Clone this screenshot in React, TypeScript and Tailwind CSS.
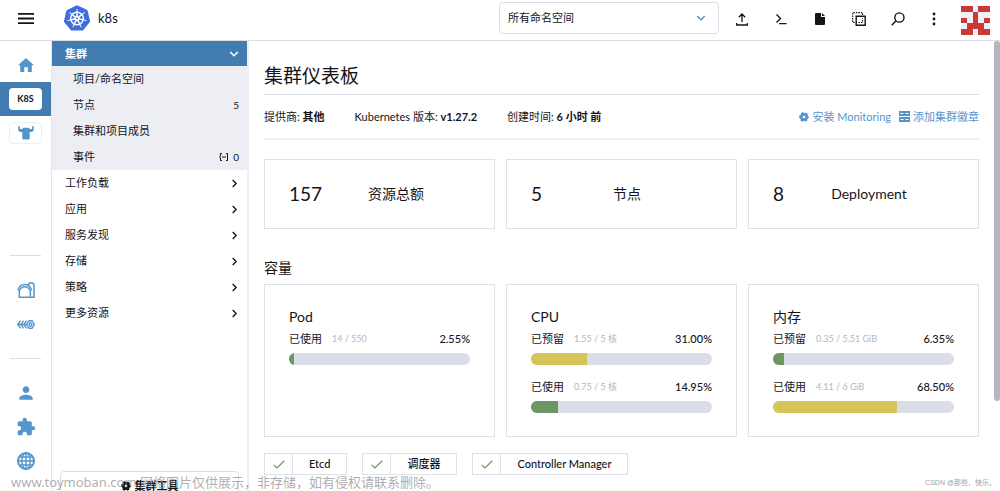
import type { ReactNode } from "react";
import { SiKubernetes } from "react-icons/si";
import { MdExtension, MdPerson } from "react-icons/md";

type IconProps = { className?: string };

const AVATAR = ["11011", "00100", "10101", "01110", "11011"];

function Chevron({ className }: IconProps) {
  return (
    <svg viewBox="0 0 10 10" className={className} fill="none" stroke="currentColor" strokeWidth="1.5">
      <path d="M3 1.2 6.8 5 3 8.8" />
    </svg>
  );
}

function Gear({ className }: IconProps) {
  return (
    <svg viewBox="0 0 24 24" className={className} fill="none" stroke="currentColor">
      <circle cx="12" cy="12" r="6.5" strokeWidth="6.5" />
      <circle cx="12" cy="12" r="9.8" strokeWidth="4" strokeDasharray="5.4 4.86" strokeDashoffset="2.7" />
    </svg>
  );
}

function ServerIcon({ className }: IconProps) {
  return (
    <svg viewBox="0 0 11 11" className={className}>
      <path
        fill="currentColor"
        fillRule="evenodd"
        d="M0 0h11v5H0zM1.5 2v1h3V2zM6.5 2v1h3V2zM0 6h11v5H0zM1.5 8v1h3V8zM6.5 8v1h3V8z"
      />
    </svg>
  );
}

function HomeIcon() {
  return (
    <svg viewBox="0 0 16 14" className="h-[14px] w-4" fill="currentColor">
      <path d="M8 0 0 7.2h2.2V14h4V9.2h3.6V14h4V7.2H16z" />
    </svg>
  );
}

function CowIcon() {
  return (
    <svg viewBox="0 0 16 14" className="h-[14px] w-4" fill="currentColor">
      <path d="M.3.2 1.7 0l.2 2.4c.1.5.4.7.9.7h1.5C4.6 2.2 5.3 1.7 6.2 1.7h3.6c.9 0 1.6.5 1.9 1.4h1.5c.5 0 .8-.2.9-.7L14.3 0l1.4.2.1 2.6c0 2-1 3.3-2.6 3.3h-1.5v5.8c0 1-.7 1.7-1.7 1.7H6c-1 0-1.7-.7-1.7-1.7V6.1H2.8C1.2 6.1.2 4.8.2 2.8z" />
    </svg>
  );
}

function BarnIcon() {
  return (
    <svg viewBox="0 0 18 16" className="h-4 w-[18px]" fill="none" stroke="currentColor" strokeWidth="1.5">
      <path d="M.8 8.5C2 4.5 4.8 2.6 7.8 2.6s5.8 1.9 7 5.9" />
      <path d="M2.3 15.2V9c1-2.6 3-4.2 5.5-4.2S12.3 6.4 13.3 9v6.2z" />
      <path d="M11.2 3.2C11.5 1.6 12.6.8 14 .8c1.9 0 3 1.3 3 3v11.4h-3.7" />
    </svg>
  );
}

function FleetIcon() {
  return (
    <svg viewBox="0 0 18 9" className="h-[9px] w-[18px]" fill="none" stroke="currentColor" strokeWidth="1.4">
      <path d="M3.500.7 1 4.500l2.500 3.800M6.500.7 4 4.500l2.500 3.800M9.500.7 7 4.500l2.500 3.800" />
      <path d="M12 .7h3l2.300 3.800L15 8.300h-3L9.800 4.500zM13 2.900h1l1 1.600-1 1.600h-1l-1-1.600zM0 4.500h10" />
    </svg>
  );
}

function GlobeIcon() {
  return (
    <svg viewBox="0 0 18 18" className="size-[18px]" fill="none" stroke="currentColor" strokeWidth="1.4">
      <circle cx="9" cy="9" r="8" strokeWidth="2" />
      <ellipse cx="9" cy="9" rx="4.2" ry="8" />
      <path d="M9 1v16M1 9h16M2.5 5h13M2.5 13h13" />
    </svg>
  );
}

function RailLink({ label, children }: { label: string; children: ReactNode }) {
  return (
    <a href="#" aria-label={label} className="flex h-[34px] shrink-0 items-center justify-center text-[#5595cd]">
      {children}
    </a>
  );
}

function Rail() {
  return (
    <nav className="flex w-[52px] shrink-0 flex-col border-r border-[#e6e7ee] pt-[7px] pb-[13px]">
      <RailLink label="Home">
        <HomeIcon />
      </RailLink>
      <a href="#" className="flex h-[34px] shrink-0 items-center justify-center bg-[#427cb0]">
        <span className="flex h-[22px] w-[33px] items-center justify-center rounded bg-white text-[9px] font-bold">
          K8S
        </span>
      </a>
      <a href="#" aria-label="local" className="flex h-[34px] shrink-0 items-center justify-center text-[#5595cd]">
        <span className="flex h-[22px] w-[33px] items-center justify-center rounded border border-[#eeeff4]">
          <CowIcon />
        </span>
      </a>
      <div className="flex-1" />
      <hr className="mx-[10px] mb-[17px] border-[#dcdee7]" />
      <RailLink label="Harvester">
        <BarnIcon />
      </RailLink>
      <RailLink label="Fleet">
        <FleetIcon />
      </RailLink>
      <hr className="mx-[10px] my-[17px] border-[#dcdee7]" />
      <RailLink label="Users">
        <MdPerson className="size-5" />
      </RailLink>
      <RailLink label="Extensions">
        <MdExtension className="size-5" />
      </RailLink>
      <RailLink label="Global">
        <GlobeIcon />
      </RailLink>
    </nav>
  );
}

const CLUSTER_ITEMS: { label: string; count?: string; namespaced?: boolean }[] = [
  { label: "项目/命名空间" },
  { label: "节点", count: "5" },
  { label: "集群和项目成员" },
  { label: "事件", count: "0", namespaced: true },
];

const GROUPS = ["工作负载", "应用", "服务发现", "存储", "策略", "更多资源"];

function Sidebar() {
  return (
    <aside className="flex w-[197px] shrink-0 flex-col overflow-hidden border-r-2 border-[#eeeff4]">
      <nav className="flex-1">
        <button className="flex h-[25px] w-full items-center justify-between bg-[#427cb0] pr-2 pl-[13px] font-bold text-white">
          集群
          <Chevron className="size-[10px] rotate-90" />
        </button>
        <ul className="bg-[#edeef3]">
          {CLUSTER_ITEMS.map((item) => (
            <li key={item.label}>
              <a href="#" className="flex h-[26px] items-center justify-between pr-2 pl-[21px]">
                {item.label}
                <span className="flex items-center gap-1 text-[10px]">
                  {item.namespaced && (
                    <svg viewBox="0 0 10 8" className="h-2 w-[10px]" fill="none" stroke="currentColor">
                      <path d="M3 .5H1.5v2.5L.5 4l1 1v2.5H3M7 .5h1.5v7H7M3 4h4" />
                    </svg>
                  )}
                  {item.count}
                </span>
              </a>
            </li>
          ))}
        </ul>
        {GROUPS.map((group) => (
          <button key={group} className="flex h-[26px] w-full items-center justify-between pr-2 pl-[13px]">
            {group}
            <Chevron className="size-[9px]" />
          </button>
        ))}
      </nav>
      <footer className="h-5 overflow-hidden px-2">
        <button className="flex h-[30px] w-full items-center justify-center gap-1 rounded border border-[#dcdee7] font-bold">
          <Gear className="size-[10px]" />
          集群工具
        </button>
      </footer>
    </aside>
  );
}

function ToolButton({ label, children }: { label: string; children: ReactNode }) {
  return (
    <button aria-label={label} className="flex h-8 w-[39px] items-center justify-center">
      {children}
    </button>
  );
}

function Header() {
  return (
    <header className="flex h-[41px] shrink-0 items-center border-b border-[#dcdee7] pb-1">
      <button aria-label="Menu" className="flex h-full w-[52px] shrink-0 items-center justify-center">
        <svg viewBox="0 0 16 11" className="h-[11px] w-4" fill="currentColor">
          <path d="M0 0h16v1.8H0zM0 4.6h16v1.8H0zM0 9.2h16V11H0z" />
        </svg>
      </button>
      <div className="flex flex-1 items-center gap-2 pl-3 text-[13px]">
        <SiKubernetes className="size-[26px] text-[#3e6ddf]" />
        k8s
      </div>
      <div className="relative w-[220px]">
        <select
          aria-label="命名空间"
          className="h-8 w-full appearance-none rounded border border-[#dcdee7] bg-white px-2 text-[11px]"
        >
          <option>所有命名空间</option>
        </select>
        <Chevron className="pointer-events-none absolute top-[11px] right-[13px] size-[10px] rotate-90 text-[#5595cd]" />
      </div>
      <div className="flex items-center pt-[2px] pl-[3px]">
        <ToolButton label="Import">
          <svg viewBox="0 0 12 13" className="h-[13px] w-3" fill="none" stroke="currentColor" strokeWidth="1.3">
            <path d="M6 9V1M2.8 4.2 6 1l3.2 3.2M.7 10v2h10.6v-2" />
          </svg>
        </ToolButton>
        <ToolButton label="Shell">
          <svg viewBox="0 0 12 12" className="size-3" fill="none" stroke="currentColor" strokeWidth="1.4">
            <path d="m1.5 1.5 4 4-4 4M4 10.6h7.5" />
          </svg>
        </ToolButton>
        <ToolButton label="Kubeconfig">
          <svg viewBox="0 0 10 12" className="h-3 w-[10px]" fill="currentColor">
            <path d="M1 0h5v4h4v7a1 1 0 0 1-1 1H1a1 1 0 0 1-1-1V1a1 1 0 0 1 1-1zM7 0l3 3H7z" />
          </svg>
        </ToolButton>
        <ToolButton label="Copy">
          <svg viewBox="0 0 14 14" className="size-[14px]" fill="none" stroke="currentColor">
            <path strokeWidth="1.2" strokeDasharray="1.5 1" d="M10.5 3V.7H.7v9.8H3" />
            <path strokeWidth="1.4" d="M4.2 4.2h9v9h-9z" />
            <path strokeDasharray="1.5 1" d="M6.5 10.5h4v-4" />
          </svg>
        </ToolButton>
        <ToolButton label="Search">
          <svg viewBox="0 0 14 14" className="size-[14px]" fill="none" stroke="currentColor" strokeWidth="1.4">
            <circle cx="8.4" cy="5.5" r="4.6" />
            <path d="M5.1 8.8.7 13.2" />
          </svg>
        </ToolButton>
        <button aria-label="More" className="flex h-8 w-[34px] items-center justify-center">
          <svg viewBox="0 0 4 14" className="h-[14px] w-1" fill="currentColor">
            <circle cx="2" cy="2" r="1.4" />
            <circle cx="2" cy="7" r="1.4" />
            <circle cx="2" cy="12" r="1.4" />
          </svg>
        </button>
      </div>
      <button aria-label="User" className="mt-1 mr-[10px] ml-[10px] size-[29px]">
        <svg viewBox="0 0 5 5" className="size-full bg-[#f0f0f0]" shapeRendering="crispEdges">
          {AVATAR.flatMap((row, y) =>
            [...row].map((cell, x) =>
              cell === "1" ? <rect key={`${x}-${y}`} x={x} y={y} width="1" height="1" fill="#c93939" /> : null,
            ),
          )}
        </svg>
      </button>
    </header>
  );
}

const STATS = [
  { value: "157", label: "资源总额" },
  { value: "5", label: "节点" },
  { value: "8", label: "Deployment" },
];

type Usage = { label: string; amount: string; percent: number; warn?: boolean };

const CAPACITY: { title: string; rows: Usage[] }[] = [
  { title: "Pod", rows: [{ label: "已使用", amount: "14 / 550", percent: 2.55 }] },
  {
    title: "CPU",
    rows: [
      { label: "已预留", amount: "1.55 / 5 核", percent: 31, warn: true },
      { label: "已使用", amount: "0.75 / 5 核", percent: 14.95 },
    ],
  },
  {
    title: "内存",
    rows: [
      { label: "已预留", amount: "0.35 / 5.51 GiB", percent: 6.35 },
      { label: "已使用", amount: "4.11 / 6 GiB", percent: 68.5, warn: true },
    ],
  },
];

function UsageRow({ label, amount, percent, warn }: Usage) {
  return (
    <div>
      <div className="flex h-5 items-center">
        <span>{label}</span>
        <span className="ml-[10px] text-[9px] text-[#b6b6c2]">{amount}</span>
        <span className="ml-auto font-medium">{percent.toFixed(2)}%</span>
      </div>
      <div className="mt-1 h-3 overflow-hidden rounded-full bg-[#dcdee7]">
        <div className={warn ? "h-full bg-[#d6c35a]" : "h-full bg-[#6a9762]"} style={{ width: `${percent}%` }} />
      </div>
    </div>
  );
}

function Dashboard() {
  return (
    <main className="min-w-0 flex-1 overflow-hidden pl-[15px]">
      <h1 className="flex h-[54px] items-center border-b border-[#dcdee7] pt-4 text-[19px]">集群仪表板</h1>
      <div className="flex h-[45px] items-center justify-between border-b-2 border-[#eeeff4]">
        <div className="flex gap-[30px]">
          <span>
            提供商: <b>其他</b>
          </span>
          <span>
            Kubernetes 版本: <b>v1.27.2</b>
          </span>
          <span>
            创建时间: <b>6 小时 前</b>
          </span>
        </div>
        <div className="flex gap-2 text-[#5595cd]">
          <a href="#" className="flex items-center gap-[3px]">
            <Gear className="size-[10px]" />
            安装 Monitoring
          </a>
          <a href="#" className="flex items-center gap-[3px]">
            <ServerIcon className="size-[11px]" />
            添加集群徽章
          </a>
        </div>
      </div>
      <section className="mt-[19px] grid grid-cols-3 gap-[11px]">
        {STATS.map((stat) => (
          <div key={stat.label} className="flex h-[70px] items-center border border-[#dfe0e8] px-6">
            <span className="text-[19px]">{stat.value}</span>
            <span className="flex-1 text-center text-[14px]">{stat.label}</span>
          </div>
        ))}
      </section>
      <h2 className="mt-[29px] h-5 text-[14px] leading-5">容量</h2>
      <section className="mt-[6px] grid grid-cols-3 gap-[11px]">
        {CAPACITY.map((card) => (
          <div key={card.title} className="border border-[#dfe0e8] px-6 pt-[22px] pb-[23px]">
            <h3 className="h-[22px] text-[14px] leading-5">{card.title}</h3>
            <div className="flex flex-col gap-3">
              {card.rows.map((row) => (
                <UsageRow key={row.label} {...row} />
              ))}
            </div>
          </div>
        ))}
      </section>
      <ul className="mt-4 flex gap-[15px]">
        {["Etcd", "调度器", "Controller Manager"].map((name) => (
          <li key={name} className="flex h-[22px] items-center border border-[#dfe0e8] font-medium">
            <span className="flex h-full w-7 items-center justify-center border-r border-[#dfe0e8]">
              <svg viewBox="0 0 12 9" className="h-[9px] w-3" fill="none" stroke="#6a9762" strokeWidth="1.2">
                <path d="m.7 4.8 3.2 3.2L11.3.7" />
              </svg>
            </span>
            <span className="px-4">{name}</span>
          </li>
        ))}
      </ul>
    </main>
  );
}

export default function App() {
  return (
    <div className="relative flex h-screen flex-col overflow-hidden bg-white font-['Lato','Noto_Sans_CJK_SC',sans-serif] text-[11px] leading-4 text-[#141419]">
      <Header />
      <div className="flex min-h-0 flex-1">
        <Rail />
        <Sidebar />
        <Dashboard />
        <div className="w-[21px] shrink-0 pl-[15px]">
          <div className="h-4/5 rounded-full bg-[#b6b6c2]" />
        </div>
      </div>
      <p className="pointer-events-none absolute bottom-0 left-[11px] font-['Noto_Sans','Noto_Sans_CJK_SC',sans-serif] text-[13px] leading-[18px] text-[#8a8a8a]/70">
        www.toymoban.com 网络图片仅供展示，非存储，如有侵权请联系删除。
      </p>
      <p className="pointer-events-none absolute right-1 bottom-0 font-['Liberation_Sans','Noto_Sans_CJK_SC',sans-serif] text-[7px] text-[#a0a0a0]">
        CSDN @那些、快乐。
      </p>
    </div>
  );
}
